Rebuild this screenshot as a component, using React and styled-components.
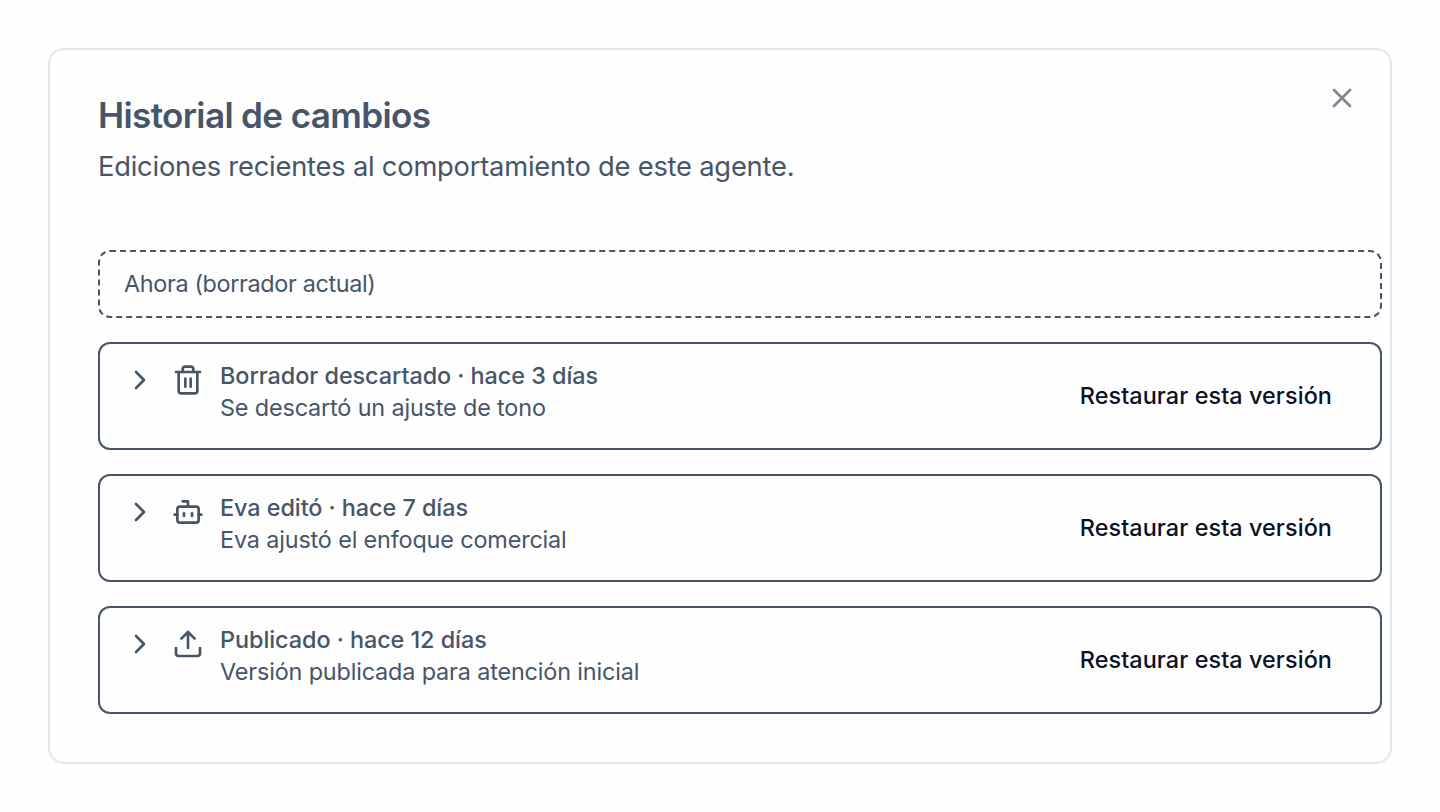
import { Bot, ChevronRight, Trash2, Upload, X } from "lucide-react";
import styled, { createGlobalStyle } from "styled-components";

const GlobalStyles = createGlobalStyle`
  :root {
    --color-page: #fefefe;
    --color-slate-200: #e2e6f1;
    --color-slate-600: #475569;
    --color-slate-950: #0b1023;
  }

  *,
  *::before,
  *::after {
    box-sizing: border-box;
    margin: 0;
    padding: 0;
  }

  body {
    background-color: var(--color-page);
    color: var(--color-slate-600);
    font-family: Inter, "Liberation Sans", sans-serif;
  }
`;

const Page = styled.main`
  min-height: 812px;
  padding: 48px;
`;

const Dialog = styled.section`
  position: relative;
  height: 716px;
  padding: 48px 8px 48px 48px;
  border: 2px solid var(--color-slate-200);
  border-radius: 16px;
`;

const CloseButton = styled.button`
  position: absolute;
  top: 32px;
  right: 32px;
  display: flex;
  border: none;
  background: none;
  color: inherit;
  opacity: 0.7;
  cursor: pointer;
`;

const Header = styled.header`
  display: flex;
  flex-direction: column;
  gap: 15px;
  margin-bottom: 63px;
`;

const Title = styled.h2`
  font-size: 35.1px;
  font-weight: 600;
  line-height: 34px;
  letter-spacing: -0.65px;
`;

const Description = styled.p`
  font-size: 27.3px;
  line-height: 40px;
  letter-spacing: -0.21px;
`;

const Versions = styled.ul`
  display: flex;
  flex-direction: column;
  gap: 24px;
  list-style: none;
`;

const CurrentDraft = styled.li`
  padding: 16px 24px;
  border: 2px dashed var(--color-slate-600);
  border-radius: 12px;
  font-size: 23.4px;
  line-height: 32px;
  letter-spacing: -0.35px;
`;

const VersionRow = styled.li`
  display: flex;
  align-items: center;
  justify-content: space-between;
  padding: 16px;
  border: 2px solid var(--color-slate-600);
  border-radius: 12px;
`;

const Summary = styled.div`
  display: flex;
  align-items: flex-start;
  align-self: flex-start;
  gap: 16px;
  padding-left: 8px;

  svg {
    flex-shrink: 0;
    margin-top: 4px;
  }
`;

const VersionTitle = styled.p`
  font-size: 23.4px;
  font-weight: 500;
  line-height: 32px;
  letter-spacing: -0.05px;
`;

const VersionDetail = styled.p`
  font-size: 23.4px;
  line-height: 32px;
  letter-spacing: -0.15px;
`;

const RestoreButton = styled.button`
  height: 72px;
  padding: 0 32px 2px;
  border: none;
  background: none;
  color: var(--color-slate-950);
  font-family: inherit;
  font-size: 23.4px;
  font-weight: 500;
  letter-spacing: 0.08px;
  cursor: pointer;
`;

const versions = [
  {
    id: 1,
    icon: Trash2,
    title: "Borrador descartado · hace 3 días",
    detail: "Se descartó un ajuste de tono",
  },
  {
    id: 2,
    icon: Bot,
    title: "Eva editó · hace 7 días",
    detail: "Eva ajustó el enfoque comercial",
  },
  {
    id: 3,
    icon: Upload,
    title: "Publicado · hace 12 días",
    detail: "Versión publicada para atención inicial",
  },
];

function Version({ version }) {
  const { icon: Icon, title, detail } = version;

  return (
    <VersionRow>
      <Summary>
        <ChevronRight size={32} />
        <Icon size={32} />
        <div>
          <VersionTitle>{title}</VersionTitle>
          <VersionDetail>{detail}</VersionDetail>
        </div>
      </Summary>
      <RestoreButton>Restaurar esta versión</RestoreButton>
    </VersionRow>
  );
}

export default function App() {
  return (
    <>
      <GlobalStyles />
      <Page>
        <Dialog>
          <Header>
            <Title>Historial de cambios</Title>
            <Description>
              Ediciones recientes al comportamiento de este agente.
            </Description>
          </Header>
          <Versions>
            <CurrentDraft>Ahora (borrador actual)</CurrentDraft>
            {versions.map((version) => (
              <Version key={version.id} version={version} />
            ))}
          </Versions>
          <CloseButton aria-label="Cerrar">
            <X size={32} />
          </CloseButton>
        </Dialog>
      </Page>
    </>
  );
}
